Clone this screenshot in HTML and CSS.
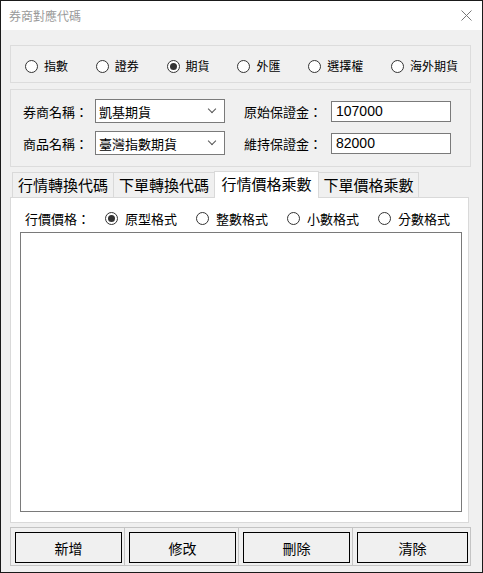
FILE: index.html
```html
<!DOCTYPE html>
<html lang="zh-Hant">
<head>
  <meta charset="UTF-8" />
  <title>券商對應代碼</title>
  <link rel="stylesheet" href="styles.css">
</head>
<body>
  <div class="window">
    <div class="titlebar">
      <span class="title">券商對應代碼</span>
      <svg class="close" width="11" height="11" viewBox="0 0 11 11">
        <path d="M0.5 0.5 L10.5 10.5 M10.5 0.5 L0.5 10.5" stroke="#777" stroke-width="1" fill="none"/>
      </svg>
    </div>

    <div class="main">
      <div class="group type-group">
        <label class="radio"><span class="dot"></span>指數</label>
        <label class="radio"><span class="dot"></span>證券</label>
        <label class="radio"><span class="dot checked"></span>期貨</label>
        <label class="radio"><span class="dot"></span>外匯</label>
        <label class="radio"><span class="dot"></span>選擇權</label>
        <label class="radio"><span class="dot"></span>海外期貨</label>
      </div>

      <div class="group info-group">
        <div class="info-row">
          <span class="lbl">券商名稱：</span>
          <div class="combo"><span>凱基期貨</span><span class="chev"></span></div>
          <span class="lbl lbl2">原始保證金：</span>
          <div class="textbox">107000</div>
        </div>
        <div class="info-row">
          <span class="lbl">商品名稱：</span>
          <div class="combo"><span>臺灣指數期貨</span><span class="chev"></span></div>
          <span class="lbl lbl2">維持保證金：</span>
          <div class="textbox">82000</div>
        </div>
      </div>

      <div class="tabs">
        <div class="tab t1">行情轉換代碼</div>
        <div class="tab t2">下單轉換代碼</div>
        <div class="tab t3 active">行情價格乘數</div>
        <div class="tab t4">下單價格乘數</div>
      </div>

      <div class="tab-page">
        <div class="price-row">
          <span class="price-lbl">行價價格：</span>
          <label class="radio"><span class="dot checked"></span>原型格式</label>
          <label class="radio"><span class="dot"></span>整數格式</label>
          <label class="radio"><span class="dot"></span>小數格式</label>
          <label class="radio last"><span class="dot"></span>分數格式</label>
        </div>
        <div class="listbox"></div>
      </div>

      <div class="btn-grid">
        <div class="cell"><button class="btn">新增</button></div>
        <div class="cell"><button class="btn">修改</button></div>
        <div class="cell"><button class="btn">刪除</button></div>
        <div class="cell"><button class="btn">清除</button></div>
      </div>
    </div>
  </div>
</body>
</html>
```

FILE: styles.css
```css
* {
  box-sizing: border-box;
}

html, body {
  margin: 0;
  height: 100%;
  background: #f0f0f0;
  font-family: "Noto Sans CJK TC", "Noto Sans", sans-serif;
  color: #000;
  overflow: hidden;
}

.window {
  width: 483px;
  height: 573px;
  border: 1px solid #1a1a1a;
  display: flex;
  flex-direction: column;
  background: #f0f0f0;
}

.titlebar {
  height: 29px;
  background: #fff;
  display: flex;
  align-items: center;
  justify-content: space-between;
  padding: 0 10px 0 8px;
  flex-shrink: 0;
}

.title {
  font-size: 12px;
  color: #9a9a9a;
  line-height: 1;
  margin-top: 1px;
}

.close {
  display: block;
}

.main {
  flex: 1;
  display: flex;
  flex-direction: column;
  padding: 15px 11px 6px 9px;
}

.group {
  border: 1px solid #dcdcdc;
}

/* radio buttons */
.radio {
  display: flex;
  align-items: center;
  gap: 6px;
  white-space: nowrap;
  line-height: 1;
  flex-shrink: 0;
}

.dot {
  width: 13px;
  height: 13px;
  border: 1px solid #333;
  border-radius: 50%;
  background: #fff;
  display: flex;
  align-items: center;
  justify-content: center;
  flex-shrink: 0;
}

.dot.checked::after {
  content: "";
  width: 7px;
  height: 7px;
  border-radius: 50%;
  background: #333;
}

.type-group {
  height: 38px;
  display: flex;
  align-items: center;
  justify-content: space-between;
  padding: 4px 12px 0 14px;
  font-size: 12px;
}

.info-group {
  margin-top: 6px;
  height: 78px;
  padding: 9px 0 0 12px;
  display: flex;
  flex-direction: column;
  gap: 8px;
}

.info-row {
  display: flex;
  align-items: center;
  height: 24px;
  font-size: 13px;
}

.lbl {
  width: 72px;
  white-space: nowrap;
}

.lbl2 {
  width: 87px;
  margin-left: 19px;
}

.combo {
  width: 130px;
  height: 24px;
  border: 1px solid #7a7a7a;
  background: #fff;
  display: flex;
  align-items: center;
  justify-content: space-between;
  padding: 0 9px 0 3px;
}

.chev {
  width: 6px;
  height: 6px;
  border-right: 1px solid #555;
  border-bottom: 1px solid #555;
  transform: rotate(45deg);
  margin-top: -4px;
}

.textbox {
  width: 120px;
  height: 21px;
  border: 1px solid #7a7a7a;
  background: #fff;
  font-family: "Liberation Sans", Arial, sans-serif;
  font-size: 14px;
  line-height: 19px;
  padding-left: 4px;
}

/* tabs */
.tabs {
  margin-top: 4px;
  height: 26px;
  display: flex;
  align-items: flex-end;
  padding-left: 2px;
  position: relative;
  z-index: 2;
}

.tab {
  height: 25px;
  border: 1px solid #d9d9d9;
  border-bottom: none;
  border-right: none;
  background: #f0f0f0;
  font-size: 15px;
  line-height: 23px;
  text-align: center;
  white-space: nowrap;
}

.t1, .t2 { width: 101px; }
.t3 { width: 105px; }
.t4 { width: 100px; border-right: 1px solid #d9d9d9; }

.tab.active {
  height: 27px;
  margin-bottom: -1px;
  background: #fff;
  border-right: 1px solid #d9d9d9;
  line-height: 24px;
}

.tab.active + .tab {
  border-left: none;
}

.tab-page {
  flex: 1;
  width: 459px;
  border: 1px solid #d9d9d9;
  background: #fff;
  display: flex;
  flex-direction: column;
  padding: 10px 6px 10px 9px;
}

.price-row {
  height: 20px;
  display: flex;
  align-items: center;
  font-size: 13px;
  padding-left: 5px;
}

.price-lbl {
  width: 80px;
  flex-shrink: 0;
}

.price-row .radio {
  width: 91px;
  gap: 7px;
}

.price-row .radio.last {
  width: auto;
}

.listbox {
  flex: 1;
  margin-top: 4px;
  border: 1px solid #7a7a7a;
  background: #fff;
}

/* bottom buttons */
.btn-grid {
  margin-top: 4px;
  height: 39px;
  display: grid;
  grid-template-columns: 113px 113px 113px 1fr;
  gap: 1px;
  padding: 1px;
  background: #c4c4c4;
}

.cell {
  background: #f0f0f0;
  padding: 4px 2px 2px 4px;
  display: flex;
}

.btn {
  flex: 1;
  height: 31px;
  border: 1px solid #000;
  background: #f0f0f0;
  font-family: "Noto Sans CJK TC", sans-serif;
  font-size: 14px;
  color: #000;
  padding: 0;
  border-radius: 0;
}
```
